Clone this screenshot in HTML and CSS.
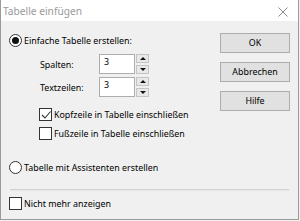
FILE: index.html
```html
<!DOCTYPE html>
<html>
<head>
<meta charset="utf-8">
<link rel="stylesheet" href="styles.css">
</head>
<body>
<div class="window">
  <div class="titlebar">
    <span class="title">Tabelle einfügen</span>
    <svg class="close" width="10" height="10" viewBox="0 0 10 10"><path d="M0.5 0.5L9.5 9.5M9.5 0.5L0.5 9.5" stroke="#8a8a8a" stroke-width="1"/></svg>
  </div>
  <div class="content">
    <div class="main">
      <div class="left">
        <div class="row r1"><span class="radio checked"></span><span class="lbl">Einfache Tabelle erstellen:</span></div>
        <div class="field f1"><span class="flabel">Spalten:</span><span class="spin"><span class="box">3</span><span class="arrows"><span class="up"></span><span class="down"></span></span></span></div>
        <div class="field f2"><span class="flabel">Textzeilen:</span><span class="spin"><span class="box">3</span><span class="arrows"><span class="up"></span><span class="down"></span></span></span></div>
        <div class="row c1 indent"><span class="check on"><svg width="10" height="10" viewBox="0 0 10 10"><path d="M1 5L4 8L9.5 1.5" fill="none" stroke="#333" stroke-width="1.1"/></svg></span><span class="lbl">Kopfzeile in Tabelle einschließen</span></div>
        <div class="row c2 indent"><span class="check"></span><span class="lbl">Fußzeile in Tabelle einschließen</span></div>
        <div class="row r2"><span class="radio"></span><span class="lbl">Tabelle mit Assistenten erstellen</span></div>
      </div>
      <div class="buttons">
        <div class="btn">OK</div>
        <div class="btn">Abbrechen</div>
        <div class="btn">Hilfe</div>
      </div>
    </div>
    <div class="sep"></div>
    <div class="row c3"><span class="check"></span><span class="lbl">Nicht mehr anzeigen</span></div>
  </div>
</div>
</body>
</html>
```
FILE: styles.css
```css
html, body { margin: 0; padding: 0; background: #f0f0f0; }
body { font-family: "Noto Sans", "Liberation Sans", sans-serif; font-size: 8.9px; color: #000; }
.window { width: 299px; height: 220px; box-sizing: border-box; border-left: 1px solid #9a9a9a; border-right: 1px solid #9a9a9a; border-bottom: 1px solid #9a9a9a; background: #f0f0f0; display: flex; flex-direction: column; }
.titlebar { height: 21px; background: #fff; display: flex; align-items: center; justify-content: space-between; padding: 0 10px 0 2px; }
.title { color: #9a9a9a; font-size: 10.2px; line-height: 21px; padding-top: 1px; }
.close { margin-top: 2px; }
.content { padding: 12px 0 0 8px; }
.main { display: flex; }
.left { flex: 1; display: flex; flex-direction: column; }
.row { display: flex; align-items: center; height: 13px; }
.lbl { margin-left: 2px; white-space: nowrap; line-height: 13px; }
.r1 { height: 14px; }
.radio { width: 11px; height: 11px; border: 1px solid #333; border-radius: 50%; background: #fff; box-sizing: content-box; display: flex; align-items: center; justify-content: center; }
.radio.checked::after { content: ""; width: 7px; height: 7px; border-radius: 50%; background: #111; }
.field { display: flex; align-items: center; height: 20px; padding-left: 31px; }
.f1 { margin-top: 7px; }
.f2 { margin-top: 3px; }
.flabel { width: 59px; }
.spin { display: flex; height: 20px; }
.box { width: 30px; height: 18px; border: 1px solid #adadad; background: #fff; padding-left: 4px; line-height: 14px; }
.arrows { display: flex; flex-direction: column; justify-content: space-between; margin-left: 1px; width: 13px; height: 20px; }
.up, .down { height: 9px; background: #e8e8e8; border: 1px solid #c4c4c4; box-sizing: border-box; display: flex; align-items: center; justify-content: center; }
.up::after { content: ""; border-left: 3px solid transparent; border-right: 3px solid transparent; border-bottom: 3px solid #111; }
.down::after { content: ""; border-left: 3px solid transparent; border-right: 3px solid transparent; border-top: 3px solid #111; }
.indent { padding-left: 30px; }
.check { width: 11px; height: 11px; border: 1px solid #333; background: #fff; display: flex; align-items: center; justify-content: center; }
.c1 { margin-top: 11px; }
.c2 { margin-top: 6px; }
.r2 { margin-top: 21px; }
.buttons { width: 70px; margin-right: 8px; display: flex; flex-direction: column; gap: 9px; }
.btn { height: 18px; border: 1px solid #adadad; background: #e1e1e1; text-align: center; line-height: 17px; }
.sep { margin: 15px 9px 0 1px; height: 1px; border-top: 1px solid #d3d3d3; background: #e6e6e6; }
.c3 { margin-top: 6px; }
```
